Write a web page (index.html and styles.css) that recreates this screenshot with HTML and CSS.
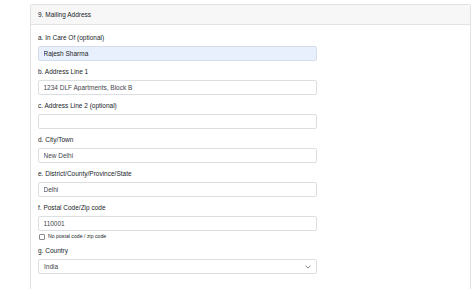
FILE: index.html
```html
<!DOCTYPE html>
<html lang="en">
  <head>
    <meta charset="UTF-8" />
    <meta name="viewport" content="width=device-width, initial-scale=1.0" />
    <title>Mailing Address</title>
    <link rel="stylesheet" href="styles.css">
  </head>
  <body>
    <div class="card">
      <div class="card-header">9. Mailing Address</div>

      <div class="card-body">
        <div class="form-group">
          <label for="careOf">a. In Care Of (optional)</label>
          <input class="form-control autofilled" id="careOf" type="text" value="Rajesh Sharma" />
        </div>

        <div class="form-group">
          <label for="line1">b. Address Line 1</label>
          <input class="form-control" id="line1" type="text" value="1234 DLF Apartments, Block B" />
        </div>

        <div class="form-group">
          <label for="line2">c. Address Line 2 (optional)</label>
          <input class="form-control" id="line2" type="text" value="" />
        </div>

        <div class="form-group">
          <label for="city">d. City/Town</label>
          <input class="form-control" id="city" type="text" value="New Delhi" />
        </div>

        <div class="form-group">
          <label for="state">e. District/County/Province/State</label>
          <input class="form-control" id="state" type="text" value="Delhi" />
        </div>

        <div class="form-group">
          <label for="zip">f. Postal Code/Zip code</label>
          <input class="form-control" id="zip" type="text" value="110001" />
          <div class="check-row">
            <span class="check-box"></span>
            <span class="check-label">No postal code / zip code</span>
          </div>
        </div>

        <div class="form-group">
          <label for="country">g. Country</label>
          <div class="form-control select">
            <span>India</span>
            <!-- chevron down -->
            <svg class="chevron" viewBox="0 0 16 16" width="6" height="6">
              <path d="M2 5l6 6 6-6" fill="none" stroke="#555b61" stroke-width="2" stroke-linecap="round" stroke-linejoin="round" />
            </svg>
          </div>
        </div>
      </div>
    </div>
  </body>
</html>
```

FILE: styles.css
```css
body {
  margin: 0;
  padding: 0;
  background-color: #ffffff;
  font-family: "Liberation Sans", Arial, sans-serif;
  color: #212529;
}

.card {
  width: 441px;
  margin: 4px 0 0 30px;
  border: 1px solid #e2e2e2;
  border-bottom: none;
  border-radius: 2px 2px 0 0;
  background: white;
  box-sizing: border-box;
  min-height: 290px;
}

.card-header {
  background-color: #f7f7f7;
  border-bottom: 1px solid #e2e2e2;
  padding: 5px 7px;
  font-size: 6.5px;
  line-height: 9px;
  color: #212529;
}

.card-body {
  padding: 8px 7px;
}

.form-group {
  margin-bottom: 6px;
}

label {
  display: block;
  font-size: 6.5px;
  line-height: 9.5px;
  margin-bottom: 3.5px;
  color: #212529;
}

.form-control {
  display: block;
  box-sizing: border-box;
  width: 279px;
  height: 15px;
  padding: 0 4.5px;
  font-family: "Liberation Sans", Arial, sans-serif;
  font-size: 6.5px;
  line-height: 13px;
  color: #3f454b;
  background: white;
  border: 1px solid #dcdfe2;
  border-radius: 2px;
  margin: 0;
  outline: none;
}

.autofilled {
  background-color: #e8f0fe;
  border-color: #d5dcea;
  color: #1c1f23;
}

.check-row {
  display: flex;
  align-items: center;
  gap: 3px;
  margin-top: 2px;
  padding-left: 1px;
}

.check-box {
  width: 4px;
  height: 4px;
  border: 1px solid #8a8a8a;
  border-radius: 1px;
  background: white;
}

.check-label {
  font-size: 5.2px;
  line-height: 7px;
  color: #212529;
}

.select {
  display: flex;
  align-items: center;
  justify-content: space-between;
  padding: 0 5px 0 5px;
}

.chevron {
  display: block;
}
```
